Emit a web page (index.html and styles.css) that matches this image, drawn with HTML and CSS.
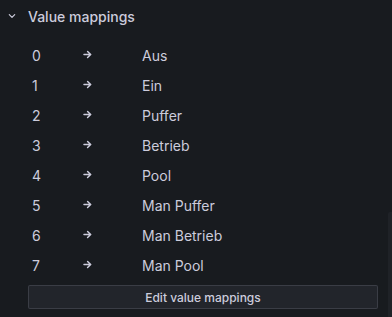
FILE: index.html
```html
<!DOCTYPE html>
<html>
<head>
<meta charset="utf-8">
<link rel="stylesheet" href="styles.css">
</head>
<body>
<div class="panel">
  <div class="section-header">
    <svg class="chevron" width="12" height="12" viewBox="0 0 12 12"><path d="M3.3 4.6 L6 7.3 L8.7 4.6" fill="none" stroke="#ccccdc" stroke-width="1.2" stroke-linecap="round" stroke-linejoin="round"/></svg>
    <span class="section-title">Value mappings</span>
  </div>
  <div class="mappings">
    <div class="row"><span class="key">0</span><svg class="arrow" viewBox="0 0 9 9"><path d="M1 4.5 H7.6 M4.6 1.5 L7.7 4.5 L4.6 7.5" fill="none" stroke="#ccccdc" stroke-width="1.5" stroke-linecap="round" stroke-linejoin="round"/></svg><span class="val">Aus</span></div>
    <div class="row"><span class="key">1</span><svg class="arrow" viewBox="0 0 9 9"><path d="M1 4.5 H7.6 M4.6 1.5 L7.7 4.5 L4.6 7.5" fill="none" stroke="#ccccdc" stroke-width="1.5" stroke-linecap="round" stroke-linejoin="round"/></svg><span class="val">Ein</span></div>
    <div class="row"><span class="key">2</span><svg class="arrow" viewBox="0 0 9 9"><path d="M1 4.5 H7.6 M4.6 1.5 L7.7 4.5 L4.6 7.5" fill="none" stroke="#ccccdc" stroke-width="1.5" stroke-linecap="round" stroke-linejoin="round"/></svg><span class="val">Puffer</span></div>
    <div class="row"><span class="key">3</span><svg class="arrow" viewBox="0 0 9 9"><path d="M1 4.5 H7.6 M4.6 1.5 L7.7 4.5 L4.6 7.5" fill="none" stroke="#ccccdc" stroke-width="1.5" stroke-linecap="round" stroke-linejoin="round"/></svg><span class="val">Betrieb</span></div>
    <div class="row"><span class="key">4</span><svg class="arrow" viewBox="0 0 9 9"><path d="M1 4.5 H7.6 M4.6 1.5 L7.7 4.5 L4.6 7.5" fill="none" stroke="#ccccdc" stroke-width="1.5" stroke-linecap="round" stroke-linejoin="round"/></svg><span class="val">Pool</span></div>
    <div class="row"><span class="key">5</span><svg class="arrow" viewBox="0 0 9 9"><path d="M1 4.5 H7.6 M4.6 1.5 L7.7 4.5 L4.6 7.5" fill="none" stroke="#ccccdc" stroke-width="1.5" stroke-linecap="round" stroke-linejoin="round"/></svg><span class="val">Man Puffer</span></div>
    <div class="row"><span class="key">6</span><svg class="arrow" viewBox="0 0 9 9"><path d="M1 4.5 H7.6 M4.6 1.5 L7.7 4.5 L4.6 7.5" fill="none" stroke="#ccccdc" stroke-width="1.5" stroke-linecap="round" stroke-linejoin="round"/></svg><span class="val">Man Betrieb</span></div>
    <div class="row"><span class="key">7</span><svg class="arrow" viewBox="0 0 9 9"><path d="M1 4.5 H7.6 M4.6 1.5 L7.7 4.5 L4.6 7.5" fill="none" stroke="#ccccdc" stroke-width="1.5" stroke-linecap="round" stroke-linejoin="round"/></svg><span class="val">Man Pool</span></div>
  </div>
  <button class="edit-btn">Edit value mappings</button>
  <div class="scrollbar"></div>
</div>
</body>
</html>
```
FILE: styles.css
```css
html, body {
  margin: 0;
  padding: 0;
  background: #181b1f;
}
.panel {
  position: relative;
  width: 392px;
  height: 317px;
  overflow: hidden;
  font-family: Inter, "Noto Sans", sans-serif;
  color: #ccccdc;
}
.section-header {
  display: flex;
  align-items: center;
  height: 32px;
  padding-left: 6px;
}
.chevron {
  width: 12px;
  height: 12px;
  margin-right: 10px;
}
.section-title {
  font-size: 14px;
  font-weight: 500;
  color: #ccccdc;
}
.mappings {
  display: flex;
  flex-direction: column;
  padding-left: 32px;
  margin-top: 8px;
}
.row {
  display: grid;
  grid-template-columns: 50px 60px 1fr;
  align-items: center;
  height: 30px;
  font-size: 14px;
}
.arrow {
  width: 9px;
  height: 9px;
  margin-left: 1px;
  margin-top: -1px;
}
.edit-btn {
  display: block;
  margin: 5px 0 0 28px;
  width: 350px;
  height: 24px;
  background: #22252b;
  border: 1px solid rgba(204, 204, 220, 0.15);
  border-radius: 2px;
  color: #ccccdc;
  font-family: Inter, "Noto Sans", sans-serif;
  font-size: 12px;
  font-weight: 500;
  padding: 0 8px;
}
.scrollbar {
  position: absolute;
  right: 0;
  top: 212px;
  width: 4px;
  height: 105px;
  background: #1f2227;
  border-radius: 2px 0 0 0;
}
```
